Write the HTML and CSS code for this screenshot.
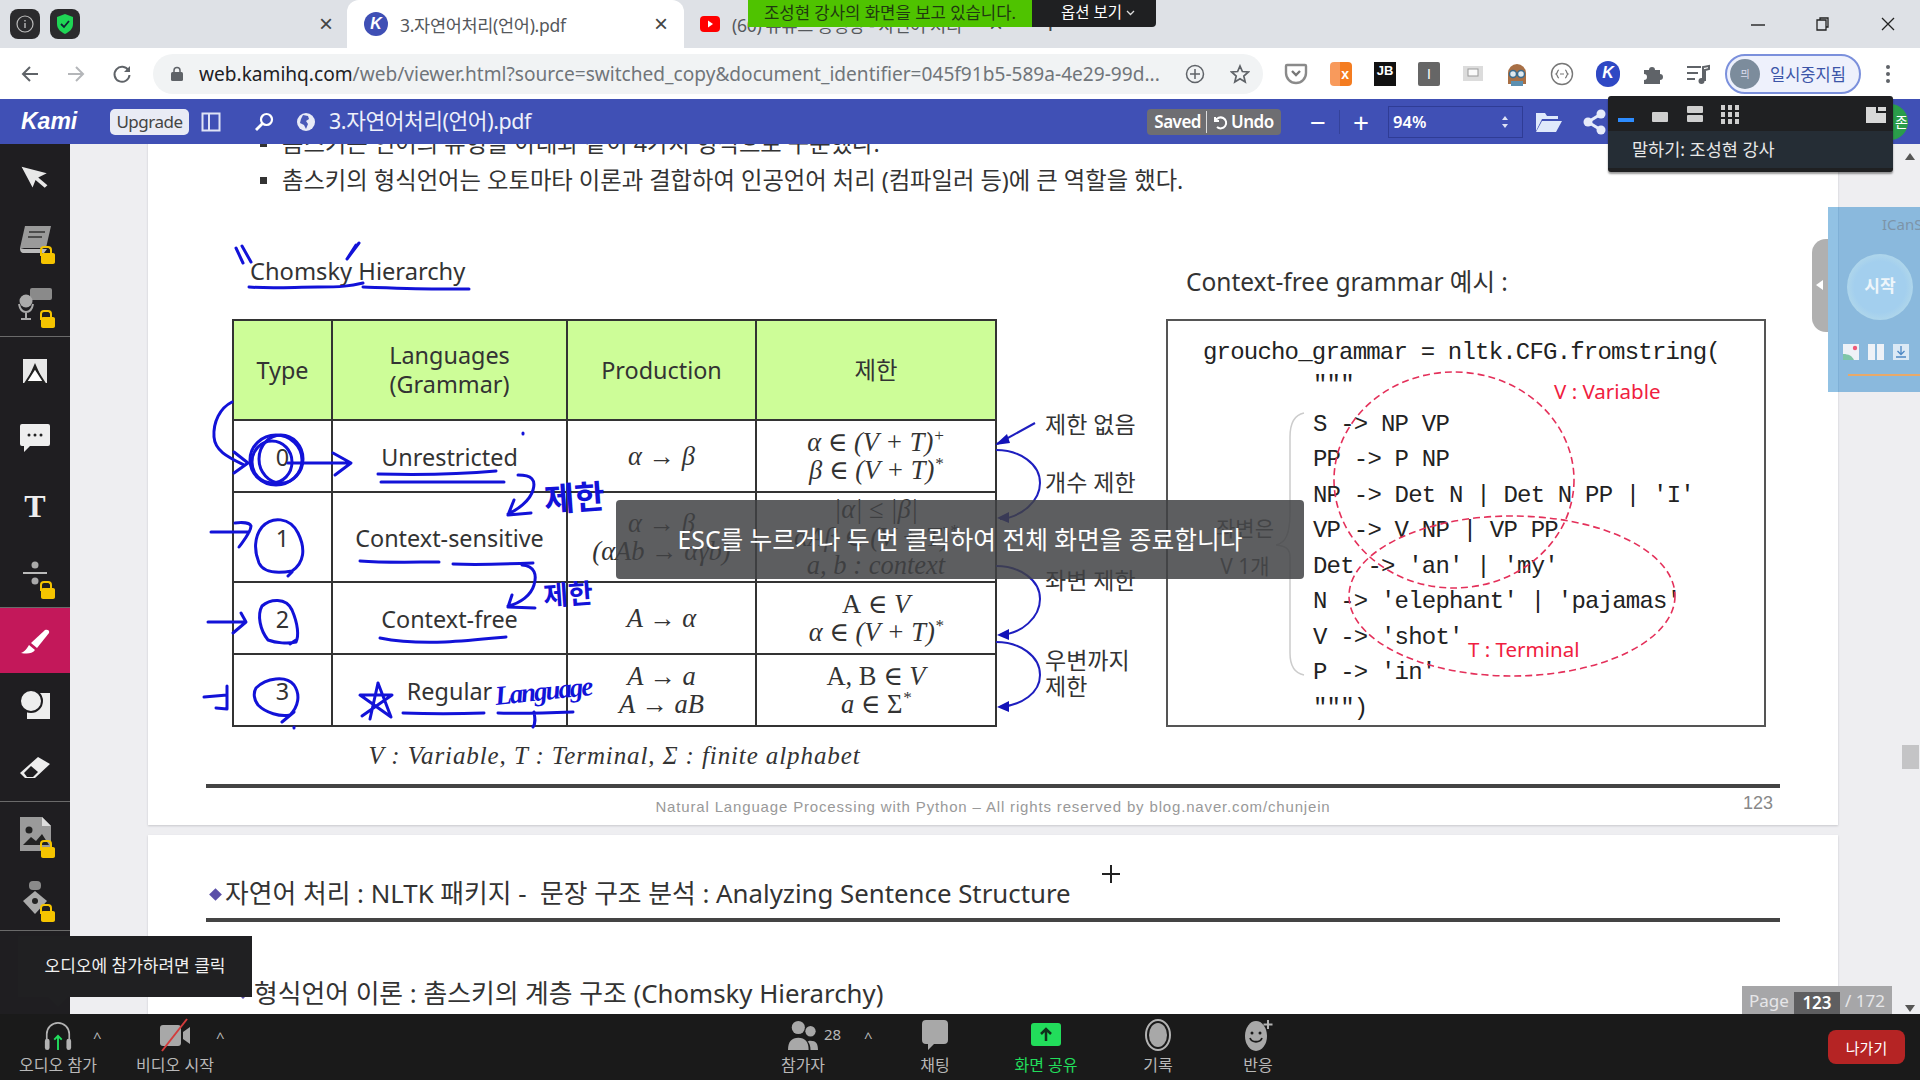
FILE: index.html
```html
<!DOCTYPE html>
<html lang="ko">

<head>
  <meta charset="UTF-8">
  <title>3.자연어처리(언어).pdf</title>
  <link rel="stylesheet" href="styles.css">
</head>

<body>
  <div class="app">
    <!-- browser tabs -->
    <div class="tabstrip">
      <span class="pin-icon">
        <svg width="20" height="20" viewBox="0 0 20 20"><circle cx="10" cy="10" r="8" fill="none" stroke="#bbb" stroke-width="1.2"/><path d="M10 9v5M10 6v1.4" stroke="#bbb" stroke-width="1.4"/></svg>
      </span>
      <span class="pin-icon">
        <svg width="20" height="22" viewBox="0 0 20 22"><path d="M10 1l8 3v7c0 5-4 8-8 10-4-2-8-5-8-10V4z" fill="#1fd655"/><path d="M6 11l3 3 5-6" fill="none" stroke="#123" stroke-width="1.8"/></svg>
      </span>
      <span class="tab-x first-x">×</span>
      <div class="tab active">
        <span class="k-logo">K</span>
        <span class="tab-title">3.자연어처리(언어).pdf</span>
        <span class="tab-x">×</span>
      </div>
      <div class="tab">
        <svg width="20" height="16" viewBox="0 0 20 16"><rect width="20" height="16" rx="4" fill="#f00"/><path d="M8 4.5l5 3.5-5 3.5z" fill="#fff"/></svg>
        <span class="tab-title">(60) 유튜브 동영상 - 자연어 처리</span>
        <span class="tab-x">×</span>
      </div>
      <span class="tab-plus">+</span>
      <div class="window-btns">
        <svg width="14" height="14" viewBox="0 0 14 14"><path d="M0 8h14" stroke="#222" stroke-width="1.4"/></svg>
        <svg width="14" height="14" viewBox="0 0 14 14"><path d="M4 3V1h8v9h-2M1 3h9v10H1z" fill="none" stroke="#222" stroke-width="1.3"/></svg>
        <svg width="14" height="14" viewBox="0 0 14 14"><path d="M1 1l12 12M13 1L1 13" stroke="#222" stroke-width="1.3"/></svg>
      </div>
    </div>

    <!-- address bar -->
    <div class="addressbar">
      <div class="nav-btns">
        <svg width="20" height="20" viewBox="0 0 20 20"><path d="M18 10H3M10 3l-7 7 7 7" fill="none" stroke="#5f6368" stroke-width="2"/></svg>
        <svg width="20" height="20" viewBox="0 0 20 20"><path d="M2 10h15M10 3l7 7-7 7" fill="none" stroke="#b4b6b9" stroke-width="2"/></svg>
        <svg width="20" height="20" viewBox="0 0 20 20"><path d="M16.5 6.5A7.5 7.5 0 1 0 17.5 11" fill="none" stroke="#5f6368" stroke-width="2"/><path d="M18 2v6h-6z" fill="#5f6368"/></svg>
      </div>
      <div class="omnibox">
        <svg width="12" height="15" viewBox="0 0 12 15"><path d="M3 7V4.500a3 3 0 0 1 6 0V7" fill="none" stroke="#5f6368" stroke-width="1.500"/><rect y="6" width="12" height="9" rx="1.500" fill="#5f6368"/></svg>
        <span class="url"><b>web.kamihq.com</b>/web/viewer.html?source=switched_copy&amp;document_identifier=045f91b5-589a-4e29-99d...</span>
        <svg class="omni-add" width="20" height="20" viewBox="0 0 20 20"><circle cx="10" cy="10" r="8.500" fill="none" stroke="#5f6368" stroke-width="1.500"/><path d="M10 5v10M5 10h10" stroke="#5f6368" stroke-width="1.500"/></svg>
        <svg class="omni-star" width="20" height="20" viewBox="0 0 20 20"><path d="M10 2l2.400 5.500 6 .5-4.600 4 1.400 6L10 14.800 4.800 18l1.400-6-4.600-4 6-.5z" fill="none" stroke="#5f6368" stroke-width="1.700"/></svg>
      </div>
      <div class="extensions">
        <svg width="24" height="24" viewBox="0 0 24 24"><path d="M3 3h18a1 1 0 0 1 1 1v7a10 10 0 0 1-20 0V4a1 1 0 0 1 1-1z" fill="#fff" stroke="#8a8a8a" stroke-width="2.400"/><path d="M8 9l4 4 4-4" fill="none" stroke="#777" stroke-width="2.400"/></svg>
        <span class="ext-box ext-ox">x</span>
        <span class="ext-box ext-jb">JB</span>
        <span class="ext-box ext-i">I</span>
        <svg width="22" height="20" viewBox="0 0 22 20"><rect x="1" y="2" width="20" height="15" fill="#dcdcdc"/><rect x="6" y="5" width="10" height="7" fill="#fafafa" stroke="#999"/></svg>
        <svg width="22" height="24" viewBox="0 0 22 24"><path d="M2 11a9 9 0 0 1 18 0v11H2z" fill="#a86f45"/><path d="M5 19h12v5H5z" fill="#5b8fb0"/><circle cx="7" cy="12" r="3.500" fill="#dfe9ef" stroke="#3a6c8f" stroke-width="1.500"/><circle cx="15" cy="12" r="3.500" fill="#dfe9ef" stroke="#3a6c8f" stroke-width="1.500"/></svg>
        <svg width="24" height="24" viewBox="0 0 24 24"><circle cx="12" cy="12" r="10.500" fill="none" stroke="#777" stroke-width="1.400"/><path d="M9 8c-2 0-1 3-3 4 2 1 1 4 3 4M15 8c2 0 1 3 3 4-2 1-1 4-3 4M10 12h4" fill="none" stroke="#777" stroke-width="1.200"/></svg>
        <span class="k-logo k-logo-lg">K</span>
        <svg width="22" height="22" viewBox="0 0 22 22"><path d="M2 7h5a3 3 0 1 1 6 0h5v4a3 3 0 1 1 0 6v4H2v-4a3 3 0 1 0 0-6z" fill="#5f6368"/></svg>
        <svg width="24" height="22" viewBox="0 0 24 22"><path d="M1 4h14M1 10h11M1 16h8" stroke="#5f6368" stroke-width="2"/><path d="M17 18V4l6-1v3l-4 1v11" fill="none" stroke="#5f6368" stroke-width="2"/><circle cx="15.500" cy="18" r="3" fill="#5f6368"/></svg>
      </div>
      <div class="profile-pill">
        <span class="avatar">믜</span>
        <span>일시중지됨</span>
      </div>
      <svg class="chrome-menu" width="6" height="20" viewBox="0 0 6 20"><circle cx="3" cy="3" r="2" fill="#5f6368"/><circle cx="3" cy="10" r="2" fill="#5f6368"/><circle cx="3" cy="17" r="2" fill="#5f6368"/></svg>
    </div>

    <!-- kami toolbar -->
    <div class="kamibar">
      <span class="kami-logo">Kami</span>
      <span class="upgrade-btn">Upgrade</span>
      <svg class="panel-icon" width="20" height="20" viewBox="0 0 20 20"><rect x="1.500" y="1.500" width="17" height="17" fill="none" stroke="#dfe3f5" stroke-width="2"/><path d="M8 2v16" stroke="#dfe3f5" stroke-width="2"/></svg>
      <svg class="search-icon" width="20" height="20" viewBox="0 0 20 20"><circle cx="12.500" cy="7.500" r="5.500" fill="none" stroke="#fff" stroke-width="2.200"/><path d="M8.500 11.500L2 18" stroke="#fff" stroke-width="2.800"/></svg>
      <svg class="globe-icon" width="18" height="18" viewBox="0 0 18 18"><circle cx="9" cy="9" r="9" fill="#e8ebf7"/><path d="M6 2l5 1 1 3-3 2 2 3-2 5-2-4-4-2 1-4z" fill="#4a5ab8"/></svg>
      <span class="kami-title">3.자연어처리(언어).pdf</span>
      <div class="kami-right">
        <div class="saved-box">
          <span>Saved</span>
          <span class="saved-sep"></span>
          <svg width="16" height="16" viewBox="0 0 16 16"><path d="M3 3v4h4M3.500 7a5.500 5.500 0 1 1 1.500 6" fill="none" stroke="#fff" stroke-width="2"/></svg>
          <span>Undo</span>
        </div>
        <span class="zoom-btn">−</span>
        <span class="zoom-sep"></span>
        <span class="zoom-btn">+</span>
        <div class="zoom-select">
          <span>94%</span>
          <svg width="8" height="14" viewBox="0 0 8 14"><path d="M4 1l3 4H1zM4 13l3-4H1z" fill="#dfe3f5"/></svg>
        </div>
        <svg width="28" height="24" viewBox="0 0 28 24"><path d="M1 3h9l2 3h11v3H7L1 21z" fill="#dfe9fb"/><path d="M7 11h20l-6 11H1z" fill="#dfe9fb"/></svg>
        <svg class="share-icon" width="24" height="26" viewBox="0 0 24 26"><path d="M18 5L5 13l13 8" fill="none" stroke="#e6ebfa" stroke-width="3"/><circle cx="18" cy="5" r="4.500" fill="#e6ebfa"/><circle cx="5" cy="13" r="4.500" fill="#e6ebfa"/><circle cx="18" cy="21" r="4.500" fill="#e6ebfa"/></svg>
      </div>
    </div>

    <div class="workspace">
      <!-- drawing tools -->
      <div class="tools">
        <div class="tool-group">
          <div class="tool">
            <svg width="28" height="28" viewBox="0 0 28 28"><path d="M2 3l24 10-9 3 8 9-3 2-8-9-4 7z" transform="rotate(-8 14 14)" fill="#e8e8e8"/></svg>
          </div>
          <div class="tool locked">
            <svg width="36" height="32" viewBox="0 0 36 32"><path d="M8 2h26l-5 22H3z" fill="#9a9a9a"/><path d="M3 24c0 3 1 5 4 5h20l3-4H7z" fill="#bbb"/><path d="M12 8h16M11 13h14" stroke="#333" stroke-width="1.500"/></svg>
          </div>
          <div class="tool locked">
            <svg width="36" height="32" viewBox="0 0 36 32"><rect x="13" y="0" width="22" height="12" rx="2" fill="#8a8a8a"/><circle cx="9" cy="13" r="6.500" fill="#aaa"/><path d="M2 16c1 6 3 8 7 8s6-2 7-8M9 24v6M4 31h10" fill="none" stroke="#aaa" stroke-width="2"/></svg>
          </div>
        </div>
        <div class="tool-group tool-group-wide">
          <div class="tool">
            <svg width="26" height="26" viewBox="0 0 26 26"><rect x="1" y="1" width="24" height="24" fill="#e8e8e8"/><path d="M13 5l7 16h-3l-4-9-4 9H6z" fill="#222"/><path d="M4 24l9-14 9 14z" fill="#fff" stroke="#222" stroke-width="2"/></svg>
          </div>
          <div class="tool">
            <svg width="32" height="30" viewBox="0 0 32 30"><path d="M3 1h26a2 2 0 0 1 2 2v18a2 2 0 0 1-2 2H11l-6 6v-6H3a2 2 0 0 1-2-2V3a2 2 0 0 1 2-2z" fill="#eee"/><circle cx="10" cy="12" r="1.500" fill="#222"/><circle cx="16" cy="12" r="1.500" fill="#222"/><circle cx="22" cy="12" r="1.500" fill="#222"/></svg>
          </div>
          <div class="tool tool-text">T</div>
          <div class="tool locked">
            <svg width="26" height="26" viewBox="0 0 26 26"><circle cx="13" cy="5" r="3.500" fill="#aaa"/><path d="M1 13h24" stroke="#bbb" stroke-width="2"/><circle cx="13" cy="21" r="3.500" fill="#aaa"/></svg>
          </div>
        </div>
        <div class="tool-group">
          <div class="tool tool-pen">
            <svg width="32" height="28" viewBox="0 0 32 28"><path d="M12 16L26 3c2-1 5 0 4 3L18 21z" fill="#fff"/><path d="M10 18l6 5c-3 4-8 4-14 3 3-1 5-3 8-8z" fill="#fff"/></svg>
          </div>
          <div class="tool">
            <svg width="32" height="32" viewBox="0 0 32 32"><rect x="8" y="4" width="23" height="26" fill="#eee"/><circle cx="12" cy="12" r="11" fill="#eee" stroke="#1f1e21" stroke-width="2"/></svg>
          </div>
          <div class="tool">
            <svg width="32" height="26" viewBox="0 0 32 26"><path d="M19 1l12 7-15 14H6L1 17z" fill="#eee"/><path d="M5 17l7-7 7 6-5 5H8z" fill="#1f1e21"/></svg>
          </div>
        </div>
        <div class="tool-group">
          <div class="tool locked">
            <svg width="34" height="36" viewBox="0 0 34 36"><path d="M2 1h22l9 9v25H2z" fill="#9a9a9a"/><path d="M24 1v9h9z" fill="#ddd"/><circle cx="11" cy="14" r="3.500" fill="#222"/><path d="M5 29l8-8 5 4 6-7 7 11z" fill="#222"/></svg>
          </div>
          <div class="tool locked">
            <svg width="26" height="34" viewBox="0 0 26 34"><rect x="7" y="0" width="12" height="9" rx="4" fill="#8a8a8a"/><path d="M13 10l12 10-12 13L1 20z" fill="#aaa"/><circle cx="13" cy="20" r="3" fill="#222"/></svg>
          </div>
        </div>
      </div>

      <!-- pdf pages -->
      <div class="viewer">
        <div class="page page-one">
          <ul class="slide-bullets">
            <li>촘스키는 언어의 유형을 아래와 같이 4가지 형식으로 구분했다.</li>
            <li>촘스키의 형식언어는 오토마타 이론과 결합하여 인공언어 처리 (컴파일러 등)에 큰 역할을 했다.</li>
          </ul>
          <div class="figures">
            <h3 class="fig-title fig-title-left">Chomsky Hierarchy</h3>
            <span></span>
            <h3 class="fig-title fig-title-right">Context-free grammar 예시 :</h3>

            <table class="hierarchy">
              <colgroup>
                <col class="col-type"><col class="col-lang"><col class="col-prod"><col class="col-limit">
              </colgroup>
              <tr class="row-head">
                <th>Type</th>
                <th>Languages<br>(Grammar)</th>
                <th>Production</th>
                <th>제한</th>
              </tr>
              <tr class="row-a">
                <td>0</td>
                <td>Unrestricted</td>
                <td class="math">α → β</td>
                <td class="math">α ∈ (V + T)<sup>+</sup><br>β ∈ (V + T)<sup>*</sup></td>
              </tr>
              <tr class="row-b">
                <td>1</td>
                <td>Context-sensitive</td>
                <td class="math">α → β<br>(αAb → αγb)</td>
                <td class="math">|α| ≤ |β|<br>αAβ ∈ (V + T)<sup>*</sup><br>a, b : context</td>
              </tr>
              <tr class="row-a">
                <td>2</td>
                <td>Context-free</td>
                <td class="math">A → α</td>
                <td class="math"><span class="upright">A</span> ∈ V<br>α ∈ (V + T)<sup>*</sup></td>
              </tr>
              <tr class="row-a">
                <td>3</td>
                <td>Regular</td>
                <td class="math">A → a<br>A → aB</td>
                <td class="math"><span class="upright">A, B</span> ∈ V<br>a ∈ <span class="upright">Σ</span><sup>*</sup></td>
              </tr>
            </table>

            <div class="limit-notes">
              <span class="note-1">제한 없음</span>
              <span class="note-2">개수 제한</span>
              <span class="note-3">좌변 제한</span>
              <span class="note-4">우변까지<br>제한</span>
            </div>

            <div class="code-box">
              <div class="code-first">groucho_grammar = nltk.CFG.fromstring(</div>
              <div class="code-quote">"""</div>
              <div class="code-body">
                <div class="code-note">좌변은<br>V 1개</div>
                <pre class="code-lines">S -&gt; NP VP
PP -&gt; P NP
NP -&gt; Det N | Det N PP | 'I'
VP -&gt; V NP | VP PP
Det -&gt; 'an' | 'my'
N -&gt; 'elephant' | 'pajamas'
V -&gt; 'shot'
P -&gt; 'in'
""")</pre>
              </div>
            </div>
          </div>
          <div class="formula">V : Variable, T : Terminal, Σ : finite alphabet</div>
          <div class="page-rule"></div>
          <div class="page-foot">
            <span></span>
            <span class="foot-text">Natural Language Processing with Python – All rights reserved by blog.naver.com/chunjein</span>
            <span class="foot-num">123</span>
          </div>
        </div>

        <div class="page page-two">
          <h2 class="slide-title"><span class="title-mark"></span>자연어 처리 : NLTK 패키지 -&nbsp; 문장 구조 분석 : Analyzing Sentence Structure</h2>
          <div class="page-rule"></div>
          <h3 class="slide-sub"><span class="sub-mark"></span>형식언어 이론 : 촘스키의 계층 구조 (Chomsky Hierarchy)</h3>
        </div>
      </div>

      <div class="scrollbar">
        <span class="scroll-up"></span>
        <span class="scroll-thumb"></span>
        <span class="scroll-down"></span>
      </div>
    </div>

    <!-- meeting controls -->
    <div class="meetingbar">
      <div class="meet-left">
        <div class="meet-item">
          <svg width="30" height="34" viewBox="0 0 32 34"><path d="M4 24V16a12 12 0 0 1 24 0v8" fill="none" stroke="#b3b3b3" stroke-width="1.800"/><rect x="2" y="21" width="5" height="12" rx="2.500" fill="#b3b3b3"/><rect x="25" y="21" width="5" height="12" rx="2.500" fill="#b3b3b3"/><path d="M16 33V18M12 22l4-4 4 4" fill="none" stroke="#22e05e" stroke-width="2"/></svg>
          <span class="meet-caret">^</span>
          <span class="meet-label">오디오 참가</span>
        </div>
        <div class="meet-item">
          <svg width="32" height="34" viewBox="0 0 32 34"><rect x="1" y="7" width="21" height="21" rx="3" fill="#a8a8a8"/><path d="M24 14l7-5v17l-7-5z" fill="#a8a8a8"/><path d="M28 1L3 33" stroke="#d33c3c" stroke-width="2"/></svg>
          <span class="meet-caret">^</span>
          <span class="meet-label">비디오 시작</span>
        </div>
      </div>
      <div class="meet-center">
        <div class="meet-item">
          <svg width="30" height="34" viewBox="0 0 32 34"><circle cx="11" cy="9" r="7" fill="#a8a8a8"/><circle cx="24" cy="13" r="5.500" fill="#a8a8a8"/><path d="M0 33c0-9 4-13 11-13s11 4 11 13z" fill="#a8a8a8"/><path d="M24 33h8c0-7-2-10-8-10-1 0-2 0-3 1 2 2 3 5 3 9z" fill="#a8a8a8"/></svg>
          <span class="people-count">28</span>
          <span class="meet-caret">^</span>
          <span class="meet-label">참가자</span>
        </div>
        <div class="meet-item">
          <svg width="28" height="34" viewBox="0 0 28 34"><path d="M5 2h18a4 4 0 0 1 4 4v16a4 4 0 0 1-4 4H13l-6 6v-6H5a4 4 0 0 1-4-4V6a4 4 0 0 1 4-4z" fill="#a8a8a8"/></svg>
          <span class="meet-label">채팅</span>
        </div>
        <div class="meet-item meet-share">
          <svg width="30" height="34" viewBox="0 0 30 34"><rect width="30" height="23" y="5" rx="3" fill="#22dd5b"/><path d="M15 23V11M10 16l5-5 5 5" fill="none" stroke="#10301b" stroke-width="2.500"/></svg>
          <span class="meet-label">화면 공유</span>
        </div>
        <div class="meet-item">
          <svg width="30" height="34" viewBox="0 0 30 34"><ellipse cx="15" cy="17" rx="12" ry="15" fill="none" stroke="#b3b3b3" stroke-width="2"/><ellipse cx="15" cy="17" rx="9" ry="12" fill="#a8a8a8"/></svg>
          <span class="meet-label">기록</span>
        </div>
        <div class="meet-item">
          <svg width="30" height="34" viewBox="0 0 30 34"><ellipse cx="13" cy="18" rx="11" ry="15" fill="#a8a8a8"/><path d="M7 20c2 5 10 5 12 0" fill="none" stroke="#1a1a1a" stroke-width="1.800"/><circle cx="9" cy="15" r="1.500" fill="#1a1a1a"/><circle cx="17" cy="15" r="1.500" fill="#1a1a1a"/><path d="M25 2v9M20.500 6.500h9" stroke="#b3b3b3" stroke-width="2"/></svg>
          <span class="meet-label">반응</span>
        </div>
      </div>
      <button class="leave-btn">나가기</button>
    </div>

    <!-- pen marks on the pdf -->
    <svg class="ink-layer" width="1920" height="1080" viewBox="0 0 1920 1080">
      <g class="ink">
        <path d="M236 248l7 15M242 246l9 16M359 243l-12 16M356 245l-9 14"/>
        <path d="M249 287c25 2 45 0 69 0s32-1 45-4M363 287c30 1 55 2 82 2l24 0"/>
        <path d="M232 402c-12 6-19 20-18 35 1 14 14 20 30 28"/>
        <path d="M234 452l14 11-14 10"/>
        <ellipse cx="276" cy="460" rx="26" ry="25"/>
        <ellipse cx="281" cy="459" rx="22" ry="24"/>
        <ellipse cx="272" cy="462" rx="20" ry="21"/>
        <path d="M288 463h60M333 453l18 10-16 12"/>
        <path d="M378 474c40 1 85 0 118-3M381 482h123"/>
        <path d="M523 433v1"/>
        <path d="M518 475c14 0 18 5 15 15-3 11-16 20-25 24M514 500l-6 15 23-2"/>
        <path d="M211 532h38M235 523c8-1 15 0 16 3 0 6-7 14-12 21"/>
        <path d="M262 527c10-11 28-10 36 6 8 16 6 30-6 38-12 2-28 3-33-8-5-12-5-26 3-36zM292 572l-4 4"/>
        <path d="M360 561c25 2 55 1 79 1M453 564c25 1 55 0 80-1"/>
        <path d="M522 565c13 1 15 10 12 20-3 10-13 18-26 21M512 595l-4 12 27 1"/>
        <path d="M208 622h37M241 613l5 9-13 11"/>
        <path d="M262 606c8-7 24-9 30 4 6 14 7 26 4 32-8 2-20 1-28-2-8-10-11-25-6-34zM296 640l-6 4"/>
        <path d="M380 638c20 4 40 5 65 4 20-1 40-3 61-5"/>
        <path d="M204 697l23-2M227 686v23l-11-1"/>
        <path d="M256 688c10-10 30-13 38-3 7 10 4 22-4 30-10 2-24-2-32-10-4-5-5-12-2-17zM294 712l-12 10M294 727v1"/>
        <path d="M378 683l-8 36M378 683l13 34-31-22 32 0-30 21"/>
        <path d="M403 713c25 1 55 1 81 0M498 713c25 1 50 0 75-1M534 712c1 6 2 11-1 15"/>
      </g>
      <g class="ink-thin">
        <path d="M1035 423l-38 21"/>
        <path d="M996 450c24 0 44 14 44 33 0 18-18 34-40 36"/>
        <path d="M996 566c24 0 44 14 44 33 0 18-18 35-40 36"/>
        <path d="M996 642c24 0 44 14 44 33 0 18-18 30-40 32"/>
      </g>
      <path class="ink-head" d="M995 445l12-11 3 9zM997 518l12-6v11zM997 635l12-6v11zM997 707l12-6v11z"/>
      <path class="brace" d="M1304 413c-10 2-14 12-14 24v76c0 20-4 30-14 32 10 1 14 4 14 12v96c0 12 4 20 14 22"/>
      <ellipse class="dash" cx="1454" cy="480" rx="120" ry="108"/>
      <ellipse class="dash" cx="1512" cy="596" rx="163" ry="80"/>
      <text class="red-label" x="1554" y="399">V : Variable</text>
      <text class="red-label" x="1468" y="657">T : Terminal</text>
      <text class="ink-text ink-large" transform="translate(545 512) rotate(-4)">제한</text>
      <text class="ink-text" transform="translate(544 606) rotate(-4)">제한</text>
      <text class="ink-text ink-lang" transform="translate(496 705) rotate(-6)">Language</text>
    </svg>

    <!-- overlays from the meeting client and the fullscreen prompt -->
    <div class="share-banner">
      <span class="share-note">조성현 강사의 화면을 보고 있습니다.</span>
      <span class="share-options">옵션 보기
        <svg width="9" height="6" viewBox="0 0 9 6"><path d="M1 1l3.500 3.500L8 1" fill="none" stroke="#ddd" stroke-width="1.300"/></svg>
      </span>
    </div>

    <div class="speaker-panel">
      <div class="speaker-views">
        <span class="view-min"></span>
        <span class="view-one"></span>
        <span class="view-two"><i></i><i></i></span>
        <span class="view-grid"><i></i><i></i><i></i><i></i><i></i><i></i><i></i><i></i><i></i></span>
        <svg width="20" height="16" viewBox="0 0 20 16"><path d="M0 0h10v6h10v10H0z" fill="#d8d8d8"/><path d="M12 0h8v4h-8z" fill="#d8d8d8"/></svg>
      </div>
      <div class="speaker-name">말하기: 조성현 강사</div>
    </div>
    <div class="speaker-tail">존</div>

    <div class="side-widget">
      <span class="widget-tab"></span>
      <span class="widget-name">ICanS</span>
      <span class="widget-start">시작</span>
      <div class="widget-icons">
        <svg width="16" height="16" viewBox="0 0 16 16"><rect width="16" height="16" fill="#eef2f7"/><circle cx="12" cy="4" r="2.200" fill="#ee5a7a"/><path d="M0 16v-6c6 0 9 2 11 6z" fill="#7fc6a8"/></svg>
        <svg width="16" height="16" viewBox="0 0 16 16"><rect width="7" height="16" fill="#eef2f7"/><rect x="9" width="7" height="16" fill="#eef2f7"/></svg>
        <svg width="16" height="16" viewBox="0 0 16 16"><rect width="16" height="16" fill="#dbe9f5"/><path d="M8 2v8M4.500 7L8 10.500 11.500 7M3 13h10" fill="none" stroke="#4d88c4" stroke-width="1.300"/></svg>
      </div>
      <span class="widget-line"></span>
    </div>

    <div class="fullscreen-toast">ESC를 누르거나 두 번 클릭하여 전체 화면을 종료합니다</div>

    <div class="audio-tip">오디오에 참가하려면 클릭</div>

    <div class="page-indicator">
      <span>Page</span>
      <span class="page-current">123</span>
      <span>/ 172</span>
    </div>

    <div class="cursor-plus"></div>
  </div>
</body>

</html>
```

FILE: styles.css
```css
* {
  box-sizing: border-box;
}

body {
  margin: 0;
  font-family: "Noto Sans", "Noto Sans CJK KR", sans-serif;
  background: #fff;
}

.app {
  position: relative;
  width: 1920px;
  height: 1080px;
  overflow: hidden;
  display: flex;
  flex-direction: column;
}

/* tab strip */
.tabstrip {
  height: 48px;
  flex: none;
  display: flex;
  align-items: center;
  background: #dee1e6;
  padding-left: 10px;
}

.pin-icon {
  width: 30px;
  height: 30px;
  margin-right: 10px;
  border-radius: 8px;
  background: #2b2b2d;
  display: flex;
  align-items: center;
  justify-content: center;
}

.tab-x {
  font-size: 24px;
  line-height: 1;
  color: #444;
  font-family: "Liberation Sans", sans-serif;
}

.first-x {
  margin-left: 229px;
  margin-right: 14px;
}

.tab {
  width: 337px;
  height: 48px;
  display: flex;
  align-items: center;
  padding: 0 16px 0 17px;
  gap: 12px;
  font-size: 17.5px;
  color: #55585c;
  white-space: nowrap;
  overflow: hidden;
}

.tab.active {
  background: #fff;
  border-radius: 12px 12px 0 0;
}

.tab .tab-x {
  margin-left: auto;
}

.tab + .tab {
  width: 335px;
  padding-left: 16px;
}

.tab-title {
  letter-spacing: -0.3px;
}

.k-logo {
  width: 24px;
  height: 24px;
  border-radius: 50%;
  background: #3f4fb5;
  color: #fff;
  font: italic 700 16px/24px "Liberation Sans", sans-serif;
  text-align: center;
  flex: none;
}

.tab-plus {
  font-size: 26px;
  color: #444;
  margin-left: 24px;
}

.window-btns {
  margin-left: auto;
  display: flex;
  gap: 51px;
  padding-right: 25px;
}

/* address row */
.addressbar {
  height: 51px;
  flex: none;
  display: flex;
  align-items: center;
  background: #fff;
  position: relative;
}

.nav-btns {
  display: flex;
  gap: 26px;
  padding-left: 20px;
  width: 153px;
}

.omnibox {
  width: 1110px;
  height: 40px;
  border-radius: 20px;
  background: #f1f3f4;
  display: flex;
  align-items: center;
  padding-left: 18px;
}

.url {
  margin-left: 16px;
  font-size: 19.1px;
  color: #70757a;
  white-space: nowrap;
}

.url b {
  font-weight: 400;
  color: #202124;
}

.omni-add {
  margin-left: auto;
}

.omni-star {
  margin: 0 13px 0 25px;
}

.extensions {
  display: flex;
  align-items: center;
  gap: 22px;
  width: 464px;
  padding-left: 21px;
}

.ext-box {
  width: 22px;
  height: 24px;
  flex: none;
  text-align: center;
  color: #fff;
  font: 700 14px/24px "Liberation Sans", sans-serif;
}

.ext-ox {
  background: linear-gradient(90deg, #f89a5c 0 45%, #f47c20 45%);
  border-radius: 4px;
  text-align: right;
  padding-right: 3px;
}

.ext-jb {
  background: #111;
  font-size: 13px;
  line-height: 18px;
}

.ext-i {
  background: #666;
  font-weight: 400;
  border-radius: 2px;
}

.k-logo-lg {
  width: 24px;
  height: 26px;
  border-radius: 12px;
  background: #2f48c4;
}

.profile-pill {
  width: 136px;
  height: 40px;
  margin-left: -2px;
  border: 2px solid #7b90dc;
  border-radius: 20px;
  background: #eef1fc;
  display: flex;
  align-items: center;
  gap: 10px;
  font-size: 16.5px;
  color: #3c55a8;
  white-space: nowrap;
  padding-left: 3px;
}

.avatar {
  width: 30px;
  height: 30px;
  border-radius: 50%;
  background: #7c8c9c;
  color: #dde;
  font-size: 10px;
  text-align: center;
  line-height: 30px;
  flex: none;
}

.chrome-menu {
  margin-left: 24px;
}

/* kami bar */
.kamibar {
  height: 45px;
  flex: none;
  display: flex;
  align-items: center;
  background: #4050b5;
  color: #fff;
  padding-left: 21px;
}

.kami-logo {
  width: 89px;
  font: italic 700 23px/1 "Liberation Sans", sans-serif;
}

.upgrade-btn {
  width: 79px;
  height: 26px;
  border-radius: 5px;
  background: #e9ebf5;
  color: #444;
  font-size: 17px;
  line-height: 25px;
  text-align: center;
  letter-spacing: -0.5px;
}

.panel-icon {
  margin-left: 12px;
}

.search-icon {
  margin-left: 33px;
}

.globe-icon {
  margin-left: 23px;
}

.kami-title {
  margin-left: 14px;
  font-size: 21.4px;
  line-height: 28px;
  padding-bottom: 2px;
  color: #eef0fa;
  letter-spacing: -0.4px;
}

.kami-right {
  margin-left: auto;
  display: flex;
  align-items: center;
  padding-right: 313px;
}

.saved-box {
  width: 134px;
  height: 26px;
  border-radius: 4px;
  background: #6e6e72;
  display: flex;
  align-items: center;
  justify-content: center;
  gap: 3px;
  font-size: 17px;
  font-weight: 600;
  letter-spacing: -0.5px;
}

.saved-sep {
  width: 1px;
  height: 22px;
  background: #ddd;
  margin: 0 2px;
}

.zoom-btn {
  font-size: 28px;
  line-height: 1;
  width: 30px;
  text-align: center;
}

.saved-box + .zoom-btn {
  margin-left: 22px;
}

.zoom-sep {
  width: 1px;
  height: 24px;
  background: #34429a;
  margin: 0 6px;
}

.zoom-select {
  width: 135px;
  height: 32px;
  margin: 0 12px 0 12px;
  border: 1px solid #2f3c95;
  display: flex;
  align-items: center;
  justify-content: space-between;
  padding: 0 13px 0 4px;
  font-size: 16.5px;
  font-weight: 600;
}

.share-icon {
  margin-left: 20px;
}

/* main area */
.workspace {
  flex: 1;
  min-height: 0;
  display: flex;
}

.tools {
  width: 70px;
  flex: none;
  background: #1f1e21;
}

.tool-group {
  border-bottom: 1px solid #6a6a6a;
}

.tool {
  position: relative;
  height: 64px;
  display: flex;
  align-items: center;
  justify-content: center;
}

.tool-group-wide .tool {
  height: 67.500px;
}

.tool-text {
  color: #eee;
  font: 700 32px/1 "Liberation Serif", serif;
}

.tool-pen {
  background: #c3185a;
  height: 65px;
}

.locked::after {
  content: "";
  position: absolute;
  right: 15px;
  bottom: 8px;
  width: 14px;
  height: 10px;
  border-radius: 2px;
  background: #f5c400;
  box-shadow: 0 -1px 0 0 #f5c400;
}

.locked::before {
  content: "";
  position: absolute;
  right: 18px;
  bottom: 16px;
  width: 8px;
  height: 8px;
  border: 2px solid #f5c400;
  border-bottom: 0;
  border-radius: 4px 4px 0 0;
}

.viewer {
  flex: 1;
  min-width: 0;
  overflow: hidden;
  background: #eeeef1;
  padding-left: 78px;
}

.page {
  width: 1690px;
  background: #fff;
  box-shadow: 0 1px 2px #c8c8cc;
  color: #333;
}

.page-one {
  height: 701px;
  margin-top: -20px;
}

.page-two {
  margin-top: 10px;
  height: 240px;
  padding-top: 38px;
}

.slide-bullets {
  margin: 0;
  padding: 1px 0 0 134px;
  font-size: 23.3px;
  line-height: 37px;
  list-style: none;
}

.slide-bullets li {
  position: relative;
  white-space: nowrap;
}

.slide-bullets li::before {
  content: "";
  position: absolute;
  left: -22px;
  top: 15px;
  width: 7px;
  height: 7px;
  background: #333;
}

.figures {
  display: grid;
  grid-template-columns: 763px 171px 600px;
  grid-template-rows: 120px 406px;
  margin-left: 84px;
}

.fig-title {
  margin: 0;
  font-weight: 400;
  font-size: 24.5px;
  white-space: nowrap;
}

.fig-title-left {
  padding: 56px 0 0 18px;
  font-size: 23.7px;
  color: #333;
}

.fig-title-right {
  padding: 64px 0 0 20px;
}

.hierarchy {
  border-collapse: collapse;
  table-layout: fixed;
  width: 763px;
  height: 406px;
  font-size: 23.4px;
  color: #333;
}

.col-type {
  width: 99px;
}

.col-lang {
  width: 235px;
}

.col-prod {
  width: 189px;
}

.col-limit {
  width: 240px;
}

.hierarchy th,
.hierarchy td {
  border: 2px solid #333;
  padding: 0;
  text-align: center;
  font-weight: 400;
}

.hierarchy td {
  padding-top: 2px;
}

.hierarchy th {
  background: #cdfd98;
  line-height: 29px;
}

.row-head {
  height: 100px;
}

.row-a {
  height: 72px;
}

.row-b {
  height: 90px;
}

.hierarchy .math {
  padding-top: 0;
  font-family: "Liberation Serif", "DejaVu Serif", serif;
  font-style: italic;
  font-size: 26.5px;
  line-height: 28px;
}

.math sup {
  font-size: 17px;
  line-height: 0;
}

.upright {
  font-style: normal;
}

.limit-notes {
  padding: 92px 0 0 50px;
  display: flex;
  flex-direction: column;
  font-size: 23px;
  line-height: 26px;
}

.note-2 {
  margin-top: 32px;
}

.note-3 {
  margin-top: 72px;
}

.note-4 {
  margin-top: 54px;
}

.code-box {
  height: 408px;
  align-self: start;
  border: 2px solid #555;
  font-family: "Liberation Mono", "DejaVu Sans Mono", monospace;
  font-size: 24px;
  letter-spacing: -0.8px;
  color: #222;
  line-height: 35.500px;
  padding-top: 14px;
}

.code-first {
  padding-left: 35px;
  white-space: nowrap;
}

.code-quote {
  padding-left: 145px;
  margin-top: -3px;
  height: 34px;
}

.code-body {
  display: flex;
  padding-top: 5px;
}

.code-note {
  width: 145px;
  padding-left: 9px;
  align-self: center;
  text-align: center;
  font-family: "Noto Sans", "Noto Sans CJK KR", sans-serif;
  font-size: 21px;
  line-height: 38px;
  letter-spacing: 0;
  color: #555;
  margin-top: -39px;
}

.code-lines {
  margin: 0;
  font: inherit;
  letter-spacing: inherit;
}

.formula {
  margin-top: 11px;
  width: 933px;
  text-align: center;
  font: italic 400 25px/40px "Liberation Serif", serif;
  letter-spacing: 0.9px;
  color: #333;
}

.page-rule {
  height: 4px;
  margin: 8px 58px 0;
  background: #444;
}

.page-foot {
  display: grid;
  grid-template-columns: 1fr auto 1fr;
  padding: 9px 65px 0;
  line-height: 20px;
}

.foot-text {
  font: 15px/20px "Liberation Sans", sans-serif;
  color: #999;
  letter-spacing: 0.84px;
}

.foot-num {
  justify-self: end;
  font: 18px/12px "Liberation Sans", sans-serif;
  color: #888;
}

.slide-title {
  margin: 0;
  padding-left: 77px;
  font-weight: 400;
  font-size: 25.8px;
  line-height: 40px;
  white-space: nowrap;
  color: #333;
  position: relative;
}

.title-mark {
  position: absolute;
  left: 63px;
  top: 17px;
  width: 9px;
  height: 9px;
  background: #5b4fa8;
  transform: rotate(45deg);
}

.page-two .page-rule {
  margin-top: 5px;
}

.slide-sub {
  margin: 51px 0 0;
  padding-left: 106px;
  font-weight: 400;
  font-size: 25.800px;
  line-height: 40px;
  white-space: nowrap;
  position: relative;
}

.sub-mark {
  position: absolute;
  left: 90px;
  top: 14px;
  width: 10px;
  height: 10px;
  background: #5b4fa8;
  transform: rotate(45deg);
}

.scrollbar {
  width: 20px;
  flex: none;
  position: absolute;
  top: 144px;
  right: 0;
  height: 870px;
  display: flex;
  flex-direction: column;
  align-items: center;
}

.scroll-up {
  margin-top: 9px;
  border: 5px solid transparent;
  border-top: 0;
  border-bottom: 7px solid #555;
}

.scroll-thumb {
  width: 17px;
  height: 24px;
  margin-top: 585px;
  background: #c4c4c6;
}

.scroll-down {
  margin-top: auto;
  margin-bottom: 2px;
  border: 5px solid transparent;
  border-bottom: 0;
  border-top: 7px solid #555;
}

/* meeting bar */
.meetingbar {
  height: 66px;
  flex: none;
  display: flex;
  align-items: flex-start;
  background: #1a1a1a;
  color: #b8b8b8;
  font-size: 15px;
}

.meet-left {
  width: 760px;
  padding-left: 15px;
  display: grid;
  grid-template-columns: 117px 117px;
}

.meet-center {
  display: grid;
  grid-template-columns: 132px 111px 112px 100px 86px;
}

.meet-item {
  position: relative;
  width: 86px;
  height: 66px;
  display: flex;
  flex-direction: column;
  align-items: center;
  padding-top: 4px;
}

.meet-item svg {
  display: block;
}

.meet-label {
  margin-top: 3px;
  font-size: 16px;
  line-height: 20px;
  white-space: nowrap;
  color: #b8b8b8;
}

.meet-caret {
  position: absolute;
  left: 78px;
  top: 13px;
  font-size: 15px;
  line-height: 20px;
}

.meet-item + .meet-item .meet-caret {
  left: 84px;
}

.people-count {
  position: absolute;
  left: 64px;
  top: 10px;
  font-size: 15px;
  line-height: 20px;
}

.meet-center .meet-caret {
  left: 104px;
}

.meet-share .meet-label {
  color: #22dd5b;
}

.leave-btn {
  margin: 16px 15px 0 auto;
  width: 77px;
  height: 34px;
  border: 0;
  border-radius: 8px;
  background: #b52424;
  color: #fff;
  font: 15px "Noto Sans CJK KR", sans-serif;
}

/* overlays */
.ink-layer {
  position: absolute;
  left: 0;
  top: 0;
  pointer-events: none;
}

.ink path,
.ink ellipse {
  fill: none;
  stroke: #1212d8;
  stroke-width: 3;
  stroke-linecap: round;
  stroke-linejoin: round;
}

.ink-thin path {
  fill: none;
  stroke: #1e1ebf;
  stroke-width: 2;
}

.ink-head {
  fill: #1313b8;
}

.brace {
  fill: none;
  stroke: #ccc;
  stroke-width: 1.5;
}

.dash {
  fill: none;
  stroke: #e4305a;
  stroke-width: 1.6;
  stroke-dasharray: 7 4;
}

.red-label {
  font-size: 20.500px;
  fill: #f02040;
}

.ink-text {
  font-family: "Noto Sans CJK KR", sans-serif;
  font-weight: 700;
  font-size: 27px;
  fill: #1212d8;
}

.ink-large {
  font-size: 33px;
}

.ink-lang {
  font-family: "Liberation Serif", serif;
  font-style: italic;
  font-size: 27px;
  letter-spacing: -2px;
}

.share-banner {
  position: absolute;
  left: 748px;
  top: 0;
  display: flex;
  height: 27px;
  line-height: 25px;
  font-size: 16.7px;
}

.share-note {
  width: 284px;
  background: #4fc300;
  color: #1f3a10;
  text-align: center;
  white-space: nowrap;
}

.share-options {
  width: 124px;
  background: #1f2022;
  color: #fff;
  text-align: center;
  border-radius: 0 0 4px 0;
  font-size: 15.5px;
  padding-left: 8px;
}

.share-options svg {
  vertical-align: 2px;
}

.speaker-panel {
  position: absolute;
  left: 1608px;
  top: 96px;
  width: 285px;
  height: 76px;
  background: #1f2022;
  border-radius: 3px;
  box-shadow: 0 2px 2px rgba(0, 0, 0, 0.4);
  z-index: 2;
}

.speaker-views {
  height: 35px;
  display: flex;
  align-items: flex-start;
  padding: 12px 7px 0 10px;
}

.speaker-views svg {
  margin-left: auto;
  margin-top: -1px;
}

.view-min {
  width: 16px;
  height: 4px;
  margin-top: 10px;
  background: #2d8cff;
}

.view-one {
  width: 16px;
  height: 10px;
  margin-left: 18px;
  margin-top: 4px;
  background: #cfcfcf;
  border-radius: 1px;
}

.view-two {
  margin-left: 19px;
  width: 16px;
  display: flex;
  flex-direction: column;
  gap: 2px;
  margin-top: -2px;
}

.view-two i {
  height: 7px;
  background: #cfcfcf;
  border-radius: 1px;
}

.view-grid {
  margin-left: 18px;
  width: 18px;
  display: grid;
  grid-template-columns: repeat(3, 4px);
  gap: 2px 3px;
  margin-top: -3px;
}

.view-grid i {
  height: 5px;
  background: #cfcfcf;
}

.speaker-name {
  height: 37px;
  background: #252d35;
  color: #e8e8e8;
  font-size: 17.5px;
  line-height: 36px;
  padding-left: 24px;
}

.speaker-tail {
  position: absolute;
  left: 1872px;
  top: 104px;
  width: 36px;
  height: 36px;
  border-radius: 50%;
  background: #2a9d4a;
  color: #fff;
  font-size: 14px;
  line-height: 36px;
  text-align: right;
  z-index: 1;
}

.side-widget {
  position: absolute;
  left: 1828px;
  top: 207px;
  width: 92px;
  height: 185px;
  background: linear-gradient(90deg, #92c2e4 0 10px, #7fb0d6 10px 11px, #8ab9dd 11px);
  overflow: visible;
}

.widget-tab {
  position: absolute;
  left: -16px;
  top: 32px;
  width: 16px;
  height: 93px;
  background: #b0b0b0;
  border-radius: 14px 0 0 14px;
}

.widget-tab::after {
  content: "";
  position: absolute;
  left: 4px;
  top: 41px;
  border: 5px solid transparent;
  border-left: 0;
  border-right: 7px solid #fff;
}

.widget-name {
  position: absolute;
  left: 54px;
  top: 8px;
  font-size: 15px;
  color: #7d94a8;
  line-height: 18px;
  white-space: nowrap;
}

.widget-start {
  position: absolute;
  left: 19px;
  top: 47px;
  width: 66px;
  height: 66px;
  border-radius: 50%;
  background: radial-gradient(circle, #a3cfee 55%, #c4e3e6 100%);
  color: #eef6fb;
  font-size: 17px;
  font-weight: 600;
  line-height: 64px;
  text-align: center;
}

.widget-icons {
  position: absolute;
  left: 15px;
  top: 137px;
  display: flex;
  gap: 9px;
}

.widget-icons svg {
  display: block;
}

.widget-line {
  position: absolute;
  left: 20px;
  right: 0;
  top: 167px;
  height: 2px;
  background: #e8a96a;
}

.fullscreen-toast {
  position: absolute;
  left: 616px;
  top: 500px;
  width: 688px;
  height: 79px;
  border-radius: 4px;
  background: rgba(65, 66, 68, 0.85);
  color: #fff;
  font-size: 24.700px;
  line-height: 79px;
  text-align: center;
  white-space: nowrap;
  z-index: 3;
}

.audio-tip {
  position: absolute;
  left: 18px;
  top: 936px;
  width: 234px;
  height: 61px;
  background: #202022;
  color: #f0f0f0;
  font-size: 17px;
  line-height: 60px;
  text-align: center;
  z-index: 3;
}

.audio-tip::after {
  content: "";
  position: absolute;
  left: 30px;
  bottom: -10px;
  border: 10px solid transparent;
  border-bottom: 0;
  border-top: 10px solid #202022;
}

.page-indicator {
  position: absolute;
  left: 1742px;
  top: 986px;
  width: 150px;
  height: 28px;
  display: flex;
  align-items: flex-end;
  justify-content: space-between;
  padding: 0 7px;
  background: #a6a6a8;
  color: #e6e6e8;
  font-size: 17px;
  line-height: 26px;
}

.page-current {
  width: 46px;
  height: 22px;
  line-height: 21px;
  background: #5e5e60;
  color: #fff;
  text-align: center;
  font-weight: 600;
}

.cursor-plus {
  position: absolute;
  left: 1102px;
  top: 865px;
  width: 18px;
  height: 18px;
  background: linear-gradient(#222, #222) center / 100% 2px no-repeat, linear-gradient(#222, #222) center / 2px 100% no-repeat;
}
```
